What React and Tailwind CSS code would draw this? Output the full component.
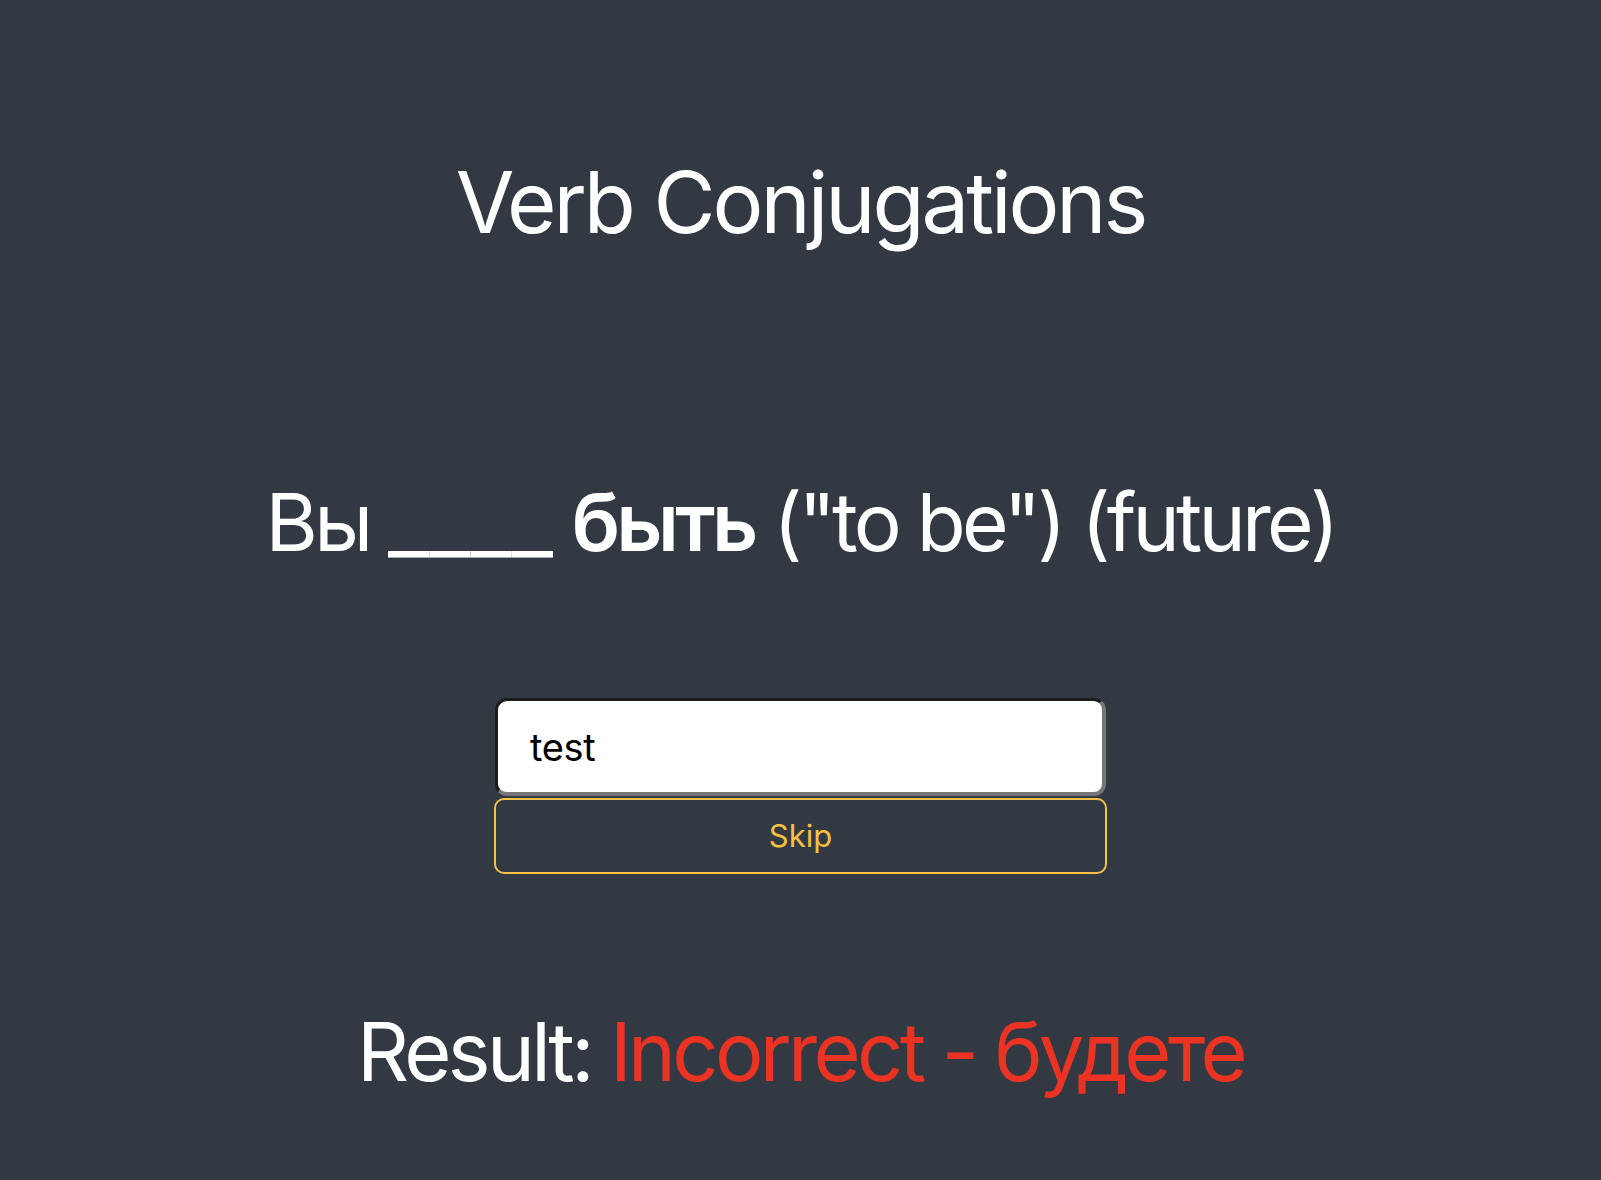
import React, { useState } from 'react';

const App = () => {
  const [answer, setAnswer] = useState('test');

  return (
    <div
      className="min-h-screen w-full bg-[#323943] flex flex-col items-center text-white"
      style={{ fontFamily: 'Inter, "Noto Sans", sans-serif' }}
    >
      {/* Title */}
      <h1 className="mt-[160px] text-[85px] leading-none font-normal tracking-[-0.036em]">
        Verb Conjugations
      </h1>

      {/* Question */}
      <p className="mt-[237px] text-[80px] leading-none tracking-[-0.047em]">
        Вы <span className="inline-block origin-left scale-x-[1.13] mr-[19px] tracking-normal">____</span>{' '}
        <span className="font-semibold">быть</span> ("to be") (future)
      </p>

      {/* Answer input */}
      <div className="mt-[136px] flex flex-col items-center gap-[2px]">
        <input
          type="text"
          value={answer}
          onChange={(e) => setAnswer(e.target.value)}
          className="w-[611px] h-[98px] bg-white text-black text-[38px] tracking-[-0.01em] pl-[32px] pr-4 rounded-[12px] border-[3px] border-r-4 border-b-4 border-t-[#1c1c1c] border-l-[#1c1c1c] border-r-[#767676] border-b-[#767676] outline-none"
        />
        <button className="w-[613px] h-[76px] rounded-[10px] border-2 border-[#f6c143] text-[#f6c143] text-[31px] bg-transparent">
          Skip
        </button>
      </div>

      {/* Result */}
      <p className="mt-[138px] text-[81px] leading-none tracking-[-0.045em]">
        Result: <span className="text-[#ea3323]">Incorrect - будете</span>
      </p>
    </div>
  );
};

export default App;
